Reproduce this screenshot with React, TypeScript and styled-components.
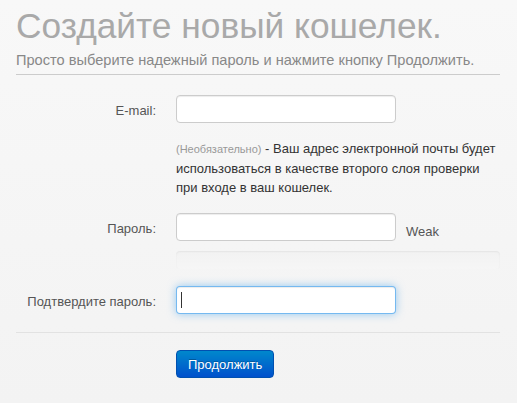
import styled, { createGlobalStyle } from 'styled-components';

const GlobalStyle = createGlobalStyle`
  html, body {
    margin: 0;
    padding: 0;
  }
  body {
    min-height: 100vh;
    background: linear-gradient(to bottom, #f8f8f8 0%, #f3f3f3 100%);
    font-family: 'Liberation Sans', Arial, sans-serif;
    font-size: 13px;
    line-height: 19px;
    color: #333;
  }
`;

export default function App() {
  return (
    <>
      <GlobalStyle />
      <Page>
        <PageHeader>
          <Title>Создайте новый кошелек.</Title>
          <Subtitle>Просто выберите надежный пароль и нажмите кнопку Продолжить.</Subtitle>
        </PageHeader>

        <Form>
          <ControlGroup>
            <Label>E-mail:</Label>
            <Controls>
              <Input type="text" />
            </Controls>
          </ControlGroup>

          <HelpBlock>
            <Muted>(Необязательно)</Muted> - Ваш адрес электронной почты будет
            использоваться в качестве второго слоя проверки при входе в ваш
            кошелек.
          </HelpBlock>

          <ControlGroup $mt={16}>
            <Label>Пароль:</Label>
            <Controls>
              <InputRow>
                <Input type="password" />
                <Strength>Weak</Strength>
              </InputRow>
              <Progress />
            </Controls>
          </ControlGroup>

          <ControlGroup $mt={17}>
            <Label>Подтвердите пароль:</Label>
            <Controls>
              <FieldWrap>
                <Input type="password" $focused />
                <Caret />
              </FieldWrap>
            </Controls>
          </ControlGroup>

          <FormActions>
            <PrimaryButton type="button">Продолжить</PrimaryButton>
          </FormActions>
        </Form>
      </Page>
    </>
  );
}

const Page = styled.div`
  width: 484px;
  padding: 6px 17px 0 16px;
`;

const PageHeader = styled.header`
  padding-bottom: 4px;
  border-bottom: 1px solid #cccccc;
`;

const Title = styled.h1`
  margin: 0;
  font-size: 35.3px;
  line-height: 40px;
  font-weight: 400;
  color: #a9a9a9;
`;

const Subtitle = styled.p`
  margin: 4px 0 0;
  font-size: 14.6px;
  line-height: 20px;
  color: #888888;
`;

const Form = styled.form`
  display: flex;
  flex-direction: column;
  margin-top: 20px;
`;

const ControlGroup = styled.div<{ $mt?: number }>`
  display: flex;
  gap: 20px;
  margin-top: ${(p) => p.$mt ?? 0}px;
`;

const Label = styled.label`
  width: 140px;
  flex-shrink: 0;
  padding-top: 6px;
  text-align: right;
  font-size: 13px;
  line-height: 19px;
  color: #555555;
`;

const Controls = styled.div`
  flex: 1;
  display: flex;
  flex-direction: column;
`;

const InputRow = styled.div`
  display: flex;
  align-items: flex-start;
`;

const FieldWrap = styled.div`
  position: relative;
  width: 220px;
`;

const Input = styled.input<{ $focused?: boolean }>`
  box-sizing: border-box;
  width: 220px;
  height: 28px;
  margin: 0;
  padding: 4px 6px;
  font-family: inherit;
  font-size: 13px;
  color: #555;
  background: #ffffff;
  border: 1px solid ${(p) => (p.$focused ? 'rgba(82, 168, 236, 0.8)' : '#cccccc')};
  border-radius: 4px;
  outline: none;
  box-shadow: ${(p) =>
    p.$focused
      ? 'inset 0 1px 1px rgba(0,0,0,0.075), 0 0 8px rgba(82,168,236,0.6)'
      : 'inset 0 1px 1px rgba(0,0,0,0.075)'};
`;

const Caret = styled.span`
  position: absolute;
  left: 5px;
  top: 6px;
  width: 1px;
  height: 16px;
  background: #333333;
`;

const Strength = styled.span`
  margin-left: 10px;
  padding-top: 9px;
  font-size: 13px;
  line-height: 19px;
  color: #555555;
`;

const Progress = styled.div`
  margin-top: 10px;
  height: 18px;
  border-radius: 4px;
  background: linear-gradient(to bottom, #f2f2f2, #f6f6f6);
  box-shadow: inset 0 1px 2px rgba(0, 0, 0, 0.06);
`;

const HelpBlock = styled.p`
  margin: 16px 0 0 160px;
  font-size: 13px;
  line-height: 19px;
  color: #333333;
`;

const Muted = styled.span`
  font-size: 11px;
  color: #999999;
`;

const FormActions = styled.div`
  margin-top: 18px;
  padding: 17px 0 20px 160px;
  border-top: 1px solid #e2e2e2;
`;

const PrimaryButton = styled.button`
  box-sizing: border-box;
  height: 28px;
  padding: 0 11px;
  font-family: inherit;
  font-size: 13px;
  line-height: 19px;
  color: #ffffff;
  text-shadow: 0 -1px 0 rgba(0, 0, 0, 0.25);
  background: linear-gradient(to bottom, #0088cc, #0050cc);
  border: 1px solid #0050b0;
  border-radius: 4px;
  cursor: pointer;
`;
